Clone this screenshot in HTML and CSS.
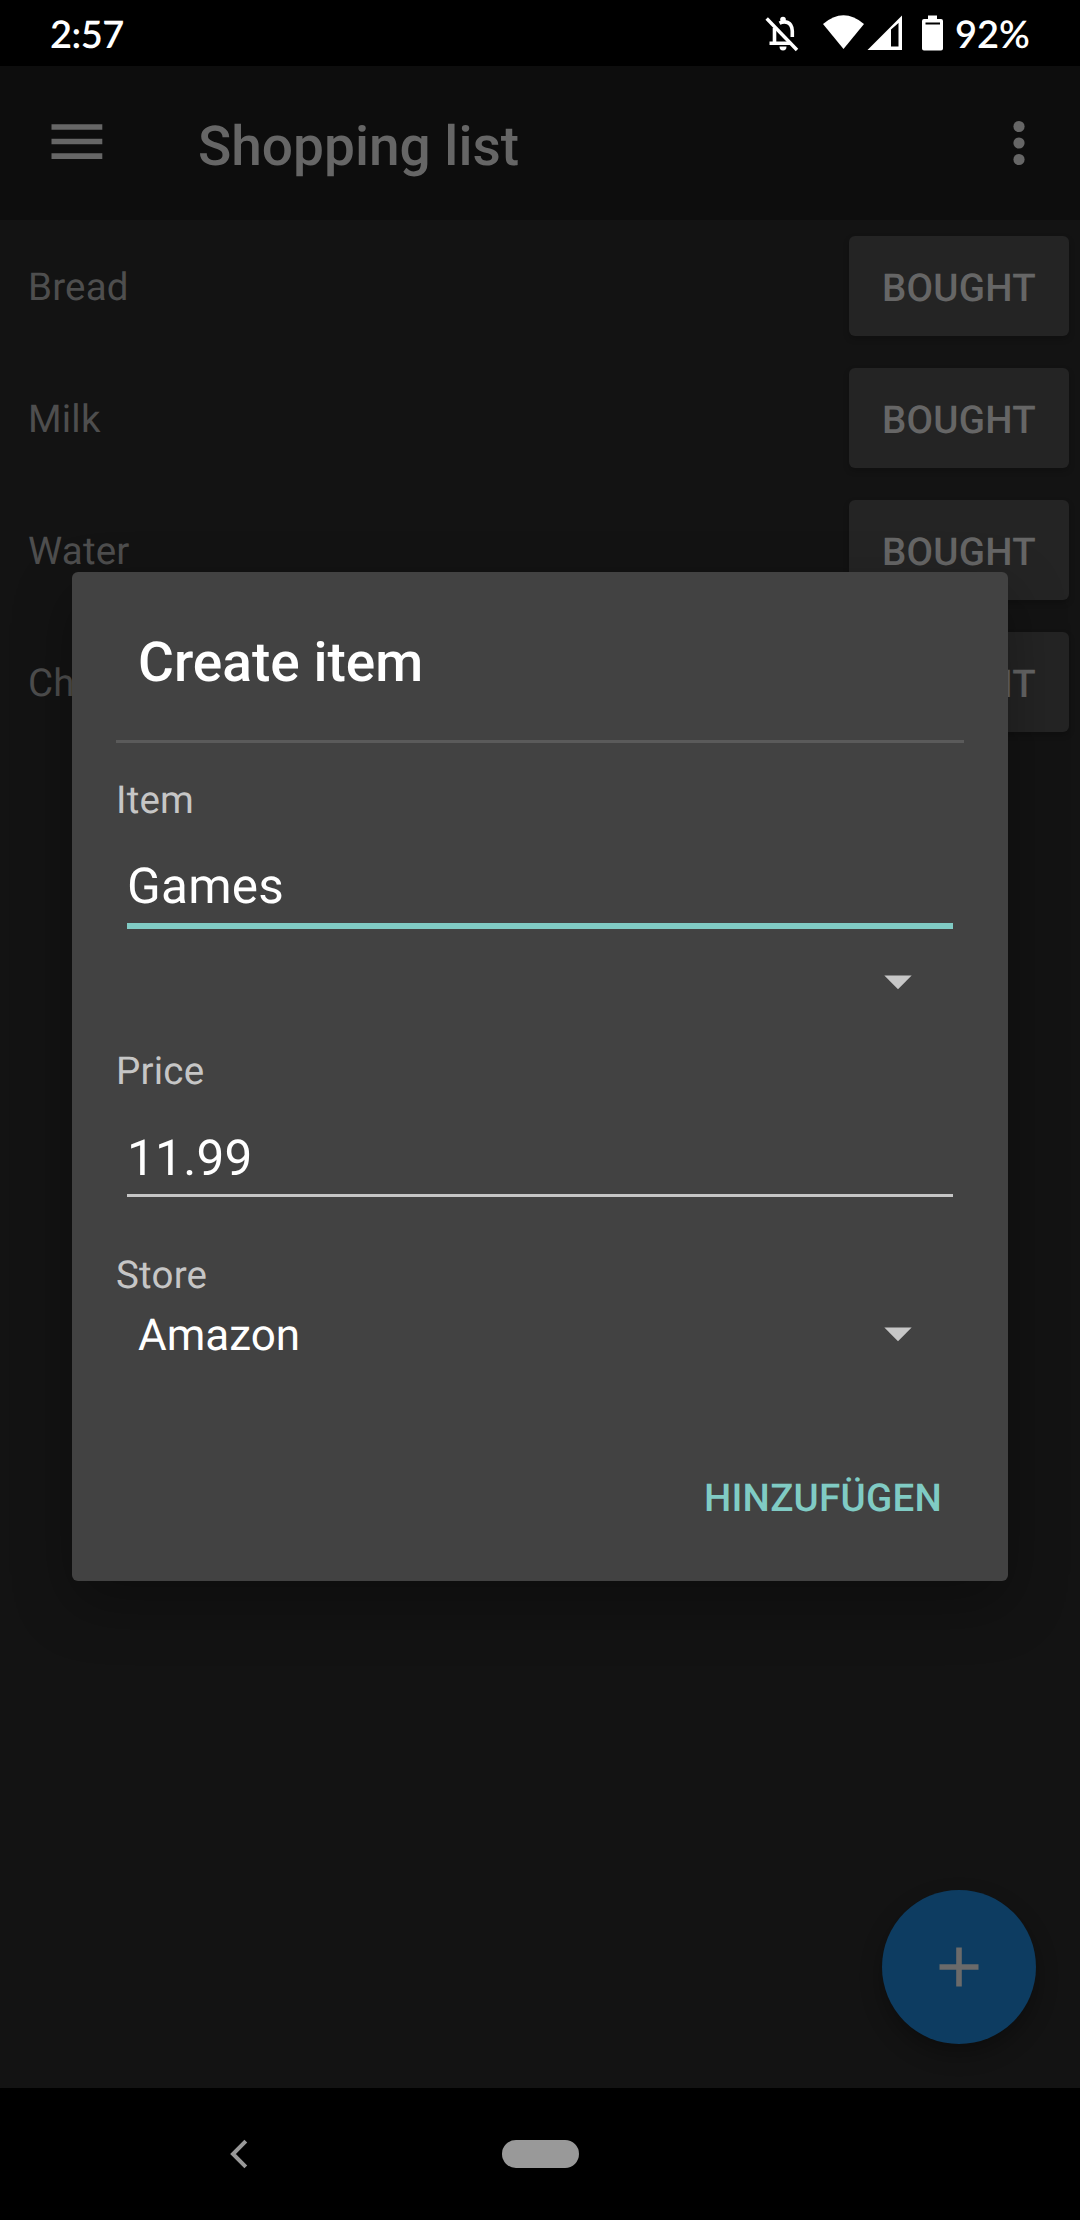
FILE: index.html
```html
<!DOCTYPE html>
<html lang="de">
<head>
<meta charset="utf-8">
<title>Shopping list</title>
<link rel="stylesheet" href="styles.css">
</head>
<body>
<div class="screen">
  <header class="status">
    <span class="clock">2:57</span>
    <svg class="status-icons" width="190" height="66" viewBox="755 0 190 66">
      <g fill="none" stroke="#fff" stroke-width="3.6">
        <path d="M769.500 43.200H791M774.500 43V28M779.500 23.200C784.500 20.500 792 21.500 792.300 31V37"/>
        <path d="M766.700 18.500L797 50" stroke-width="3.4"/>
      </g>
      <circle cx="783" cy="19.500" r="2.800" fill="#fff"/>
      <path d="M779.500 46.500H786.500A3.500 4 0 0 1 779.500 46.500Z" fill="#fff"/>
      <path d="M823 24Q843.500 6.500 864 24L843.500 49Z" fill="#fff"/>
      <path fill-rule="evenodd" d="M867.500 50L902 15.500V50ZM891 29.500V46.500H898.500V23Z" fill="#fff"/>
      <path fill-rule="evenodd" d="M928 15.500H937V19H941Q943 19 943 21V48.500Q943 50.500 941 50.500H924Q922 50.500 922 48.500V21Q922 19 924 19H928ZM925.500 22.500V24.500H940V22.500Z" fill="#fff"/>
    </svg>
    <span class="percent">92%</span>
  </header>

  <main class="app">
    <div class="toolbar">
      <svg class="menu" width="52" height="36" viewBox="0 0 52 36"><path d="M.500 .200H51.300V5.700H.500ZM.500 14.700H51.300V20.200H.500ZM.500 29.200H51.300V34.900H.500Z" fill="#666"/></svg>
      <h1>Shopping list</h1>
      <svg class="more" width="12" height="46" viewBox="0 0 12 46" fill="#666"><circle cx="6" cy="6.500" r="5.600"/><circle cx="6" cy="23" r="5.600"/><circle cx="6" cy="39.500" r="5.600"/></svg>
    </div>
    <ul class="list">
      <li><span>Bread</span><button>BOUGHT</button></li>
      <li><span>Milk</span><button>BOUGHT</button></li>
      <li><span>Water</span><button>BOUGHT</button></li>
      <li><span>Chips</span><button>BOUGHT</button></li>
    </ul>
    <div class="fab"><svg width="40" height="40" viewBox="0 0 40 40"><path d="M17.200 .500H22.800V17.200H39.500V22.800H22.800V39.500H17.200V22.800H.500V17.200H17.200Z" fill="#6a6a6a"/></svg></div>
  </main>

  <nav class="navbar">
    <svg class="back" width="18" height="30" viewBox="0 0 18 30"><path d="M15.800 2.200L3 15L15.800 27.800" fill="none" stroke="#999" stroke-width="4"/></svg>
    <div class="pill"></div>
  </nav>

  <section class="dialog">
    <h2>Create item</h2>
    <label class="item-label">Item</label>
    <div class="field focused">Games</div>
    <div class="select suggestion"><span></span><svg width="28" height="15" viewBox="0 0 28 15"><path d="M.300 .500H27.700L14 14.300Z" fill="#c7c7c7"/></svg></div>
    <label class="price-label">Price</label>
    <div class="field">11.99</div>
    <label class="store-label">Store</label>
    <div class="select"><span>Amazon</span><svg width="28" height="15" viewBox="0 0 28 15"><path d="M.300 .500H27.700L14 14.300Z" fill="#c7c7c7"/></svg></div>
    <div class="actions">HINZUFÜGEN</div>
  </section>
</div>
</body>
</html>
```
FILE: styles.css
```css
* { box-sizing: border-box; }

body {
  margin: 0;
  background: #000;
  font-family: Roboto, "Liberation Sans", sans-serif;
  text-rendering: geometricPrecision;
}

.screen {
  position: relative;
  display: flex;
  flex-direction: column;
  width: 1080px;
  height: 2220px;
  overflow: hidden;
}

.status {
  display: flex;
  align-items: center;
  height: 66px;
  padding: 0 49px 0 50px;
  background: #000;
  color: #fff;
  font: 600 38px/66px Lato, sans-serif;
}
.clock { padding-top: 2px; letter-spacing: -.5px; }
.status-icons { margin-left: auto; }
.percent { width: 76px; margin-left: 10px; padding-top: 2px; white-space: nowrap; }

.app {
  display: flex;
  flex-direction: column;
  height: 2022px;
  background: #131313;
}

.toolbar {
  display: flex;
  align-items: center;
  height: 154px;
  padding: 0 55px 0 51px;
  background: #0d0d0d;
}
.menu { margin-bottom: 3px; }
.more { margin-left: auto; }
h1 {
  margin: 8px 0 0 95px;
  color: #666;
  font-size: 55px;
  font-weight: 500;
  line-height: 64px;
}

.list { margin: 0; padding: 0; list-style: none; }
.list li {
  display: flex;
  align-items: center;
  justify-content: space-between;
  height: 132px;
  padding: 0 11px 0 28px;
  color: #4e4e4e;
  font-size: 38.5px;
  letter-spacing: .2px;
}
.list span { padding-top: 3px; }
.list button {
  width: 220px;
  height: 100px;
  border: 0;
  border-radius: 6px;
  padding: 5px 0 0;
  background: #242424;
  color: #666;
  font: 500 38.5px/46px Roboto, sans-serif;
  letter-spacing: .25px;
  text-rendering: geometricPrecision;
  box-shadow: 0 3px 6px rgba(0, 0, 0, .2);
}

.fab {
  display: flex;
  align-items: center;
  justify-content: center;
  width: 154px;
  height: 154px;
  margin: auto 44px 44px auto;
  border-radius: 50%;
  background: #0d3c61;
  box-shadow: 0 10px 22px rgba(0, 0, 0, .3);
}

.navbar {
  display: flex;
  align-items: center;
  height: 132px;
  padding-left: 230px;
  background: #000;
}
.pill {
  width: 77px;
  height: 28px;
  margin-left: 254px;
  border-radius: 14px;
  background: #999;
}

/* Modal over the list */
.dialog {
  position: absolute;
  left: 72px;
  top: 572px;
  display: flex;
  flex-direction: column;
  width: 936px;
  height: 1009px;
  padding: 0 44px;
  border-radius: 6px;
  background: #424242;
  box-shadow: 0 22px 60px rgba(0, 0, 0, .3);
}
h2 {
  height: 171px;
  margin: 0;
  padding: 59px 22px 0;
  border-bottom: 3px solid #5a5a5a;
  color: #fff;
  font-size: 55px;
  font-weight: 500;
  line-height: 64px;
}
label {
  height: 46px;
  color: #c6c6c6;
  font-size: 38.5px;
  letter-spacing: .2px;
  line-height: 48px;
}
.item-label { margin-top: 34px; }
.price-label { margin-top: 33px; }
.store-label { height: 48px; margin-top: 56px; line-height: 46px; }
.field {
  height: 82px;
  margin: 21px 11px 0;
  padding-top: 15px;
  border-bottom: 3px solid #c6c6c6;
  color: #fff;
  font-size: 49.5px;
  letter-spacing: .25px;
  line-height: 58px;
}
.focused { height: 86px; margin-top: 20px; border-bottom: 6px solid #80cbc4; }
.select {
  display: flex;
  align-items: center;
  justify-content: space-between;
  height: 66px;
  padding: 0 52px 0 22px;
  color: #fff;
  font-size: 44px;
}
.select span { padding-top: 2px; }
.suggestion { margin-top: 20px; }
.actions {
  margin-top: 109px;
  padding-right: 22px;
  color: #80cbc4;
  font-size: 38.5px;
  font-weight: 500;
  letter-spacing: .25px;
  line-height: 46px;
  text-align: right;
}
```
